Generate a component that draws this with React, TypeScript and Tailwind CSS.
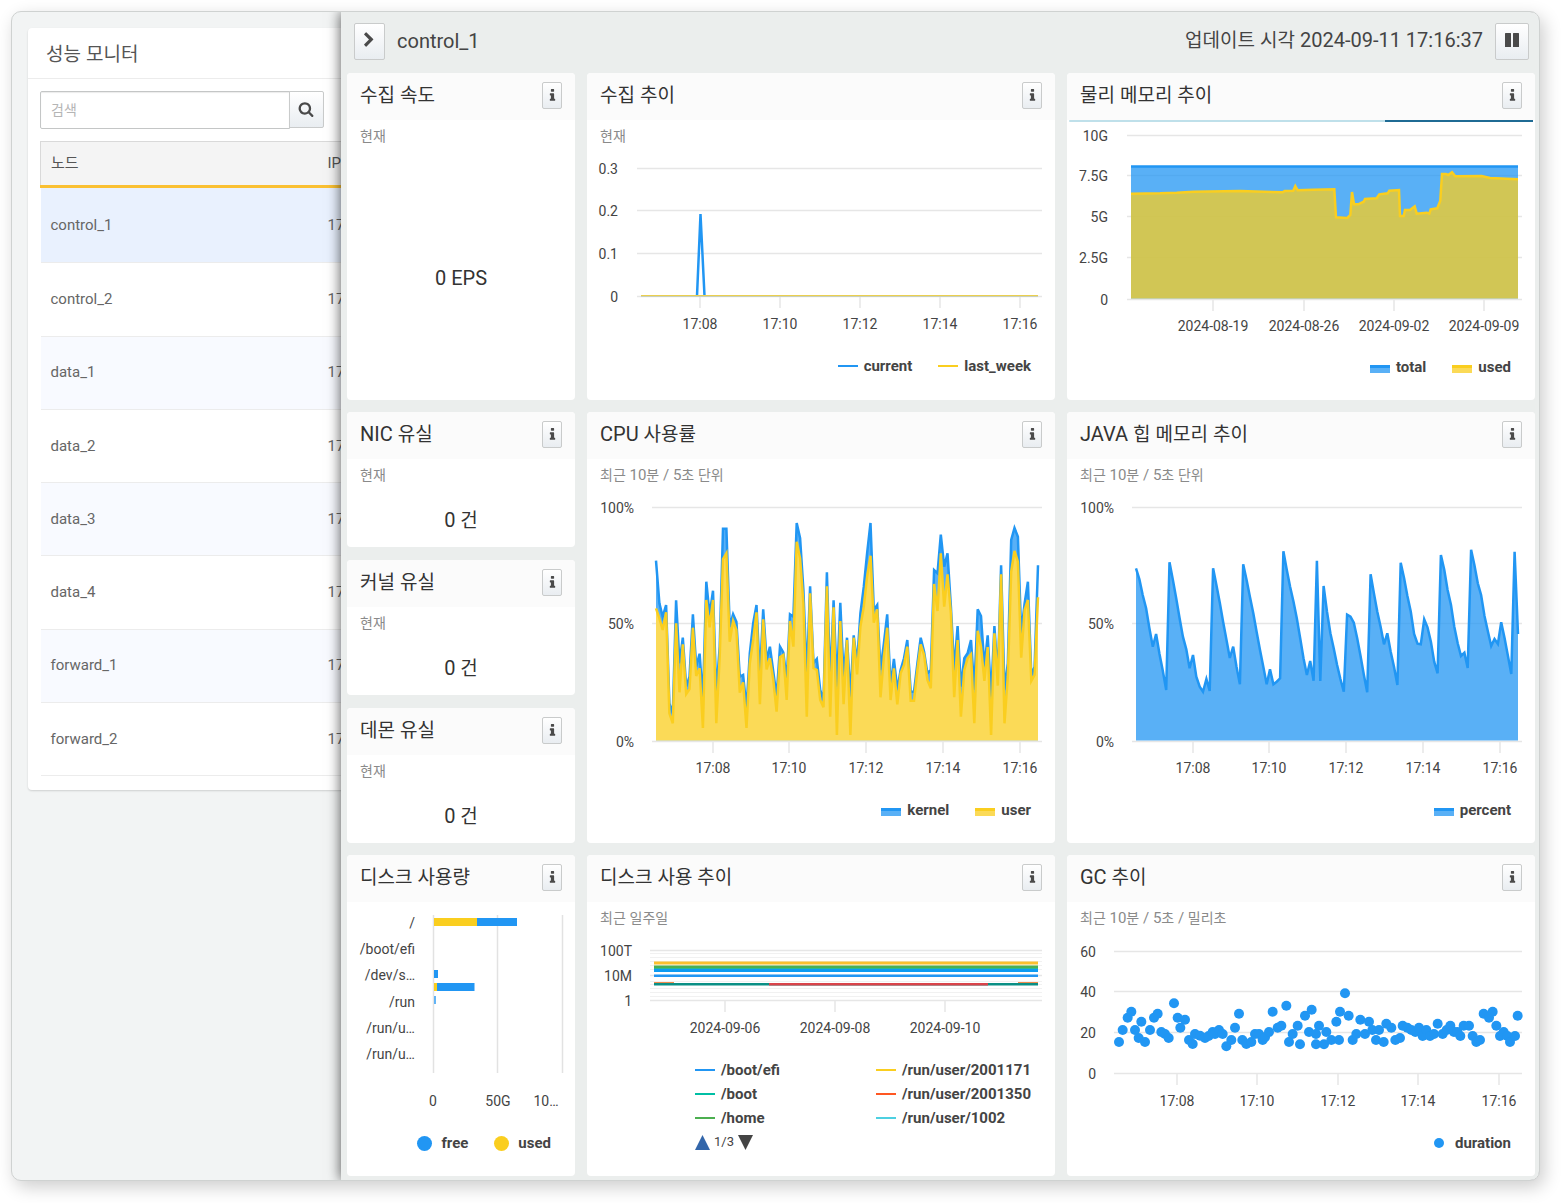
import React from "react";

type Point = [number, number];

const BLUE = "#2196f3";
const YELLOW = "#face1f";

/* ---------- data ---------- */

const nodes = ["control_1", "control_2", "data_1", "data_2", "data_3", "data_4", "forward_1", "forward_2"];

const memoryUsed: Point[] = [
  [213, 581], [300, 580], [350, 578], [400, 575], [540, 573], [668, 577], [674, 573], [700, 572], [706, 558],
  [713, 571], [760, 569], [823, 568], [828, 652], [862, 654], [871, 645], [876, 576], [882, 613], [895, 613],
  [911, 605], [915, 597], [950, 595], [958, 583], [983, 580], [988, 572], [1017, 570], [1020, 648], [1031, 648],
  [1035, 630], [1050, 630], [1064, 619], [1070, 641], [1100, 638], [1108, 641], [1112, 628], [1132, 625],
  [1141, 602], [1146, 522], [1158, 522], [1165, 525], [1176, 517], [1186, 529], [1265, 528], [1290, 534],
  [1374, 538],
];

const cpuUser = [
  355, 385, 420, 367, 670, 700, 400, 607, 463, 612, 597, 413, 558, 535, 714, 330, 412, 330, 700, 500, 207, 190, 455,
  393, 420, 608, 577, 714, 520, 450, 367, 643, 388, 538, 505, 570, 665, 502, 495, 630, 393, 470, 155, 205, 340, 680,
  310, 535, 540, 630, 652, 289, 680, 352, 735, 393, 643, 450, 735, 443, 553, 410, 350, 260, 197, 398, 358, 622, 500,
  413, 630, 535, 643, 550, 525, 470, 632, 632, 540, 463, 495, 570, 595, 282, 363, 190, 350, 253, 370, 622, 450, 680,
  540, 505, 493, 700, 422, 470, 573, 471, 735, 430, 587, 253, 700, 560, 245, 183, 215, 503, 360, 330, 573, 555, 322,
];

const cpuKernel = [
  212, 340, 380, 345, 640, 670, 331, 520, 443, 590, 560, 373, 530, 491, 630, 275, 375, 302, 610, 470, 116, 116, 410,
  373, 395, 560, 555, 655, 490, 400, 345, 560, 358, 510, 470, 545, 620, 470, 487, 570, 373, 380, 99, 145, 300, 560,
  289, 520, 507, 600, 630, 247, 580, 331, 590, 338, 560, 443, 620, 436, 520, 370, 290, 190, 99, 360, 345, 540, 460,
  373, 590, 507, 600, 540, 505, 450, 605, 605, 520, 443, 485, 550, 540, 240, 250, 134, 230, 190, 350, 540, 408, 590,
  505, 490, 450, 600, 358, 378, 530, 436, 620, 408, 560, 226, 600, 520, 150, 114, 140, 430, 340, 275, 555, 530, 226,
];

const heapPercent = [
  235, 268, 315, 355, 415, 470, 432, 492, 542, 600, 217, 270, 325, 385, 440, 478, 535, 495, 560, 590, 605, 567, 603,
  235, 285, 338, 395, 450, 504, 470, 530, 583, 223, 270, 320, 370, 425, 480, 530, 583, 538, 583, 575, 565, 184, 240,
  290, 335, 385, 445, 505, 555, 513, 572, 212, 573, 288, 365, 430, 475, 525, 567, 605, 374, 380, 398, 445, 497, 555,
  607, 253, 310, 365, 410, 463, 430, 485, 530, 585, 218, 265, 318, 365, 432, 461, 463, 388, 412, 455, 515, 550, 195,
  240, 300, 345, 410, 460, 498, 488, 534, 179, 225, 280, 315, 378, 423, 468, 447, 462, 397, 445, 497, 552, 185, 432,
];

const gcDurations: Point[] = [
  [177, 366], [188, 330], [203, 293], [214, 275], [225, 330], [236, 354], [244, 305], [255, 366], [270, 330],
  [282, 293], [293, 281], [304, 336], [315, 342], [326, 354], [342, 250], [353, 293], [361, 323], [375, 299],
  [387, 360], [398, 372], [405, 342], [420, 347], [435, 354], [446, 348], [458, 336], [465, 342], [477, 330],
  [488, 342], [499, 379], [514, 360], [525, 323], [537, 281], [547, 360], [559, 372], [574, 366], [585, 342],
  [597, 342], [608, 360], [615, 352], [627, 336], [638, 275], [653, 323], [664, 317], [679, 257], [687, 366],
  [698, 342], [713, 317], [720, 373], [735, 287], [747, 336], [755, 269], [768, 342], [768, 373], [777, 317],
  [792, 373], [799, 336], [814, 360], [829, 305], [837, 360], [840, 275], [855, 220], [866, 287], [878, 360],
  [889, 342], [901, 299], [915, 342], [927, 305], [937, 330], [948, 360], [957, 330], [971, 366], [979, 311],
  [994, 323], [1006, 360], [1020, 354], [1028, 317], [1042, 323], [1054, 330], [1066, 336], [1077, 323],
  [1088, 348], [1099, 330], [1110, 348], [1122, 342], [1133, 311], [1148, 342], [1160, 330], [1171, 317],
  [1182, 336], [1192, 336], [1201, 348], [1211, 317], [1227, 317], [1238, 348], [1249, 366], [1260, 360],
  [1271, 281], [1287, 293], [1298, 275], [1309, 317], [1320, 348], [1331, 336], [1342, 348], [1350, 366],
  [1365, 348], [1373, 287],
];

/* Samples are stored at three units per chart unit, measured from (ox, oy). */
const place = (data: Point[], ox: number, oy: number): Point[] => data.map(([x, y]) => [(x - ox) / 3, (y - oy) / 3]);

/* Evenly spaced samples of the ten-minute charts. */
const spread = (values: number[]): Point[] => values.map((v, i) => [69 + (i * 382) / (values.length - 1), v / 3 + 1]);

const join = (points: Point[]) => points.map(([x, y]) => `${x.toFixed(1)},${y.toFixed(1)}`).join(" ");

/* ---------- icons ---------- */

function Glyph({ d, size }: { d: string; size: number }) {
  return (
    <svg viewBox="0 0 1792 1792" width={size} height={size} fill="currentColor" aria-hidden="true">
      <path d={d} />
    </svg>
  );
}

const CHEVRON =
  "M1363 877l-742 742q-19 19-45 19t-45-19l-166-166q-19-19-19-45t19-45l531-531-531-531q-19-19-19-45t19-45l166-166q19-19 45-19t45 19l742 742q19 19 19 45t-19 45z";
const SEARCH =
  "M1216 832q0-185-131.5-316.5t-316.5-131.5-316.5 131.5-131.5 316.5 131.5 316.5 316.5 131.5 316.5-131.5 131.5-316.5zm512 832q0 52-38 90t-90 38q-54 0-90-38l-343-342q-179 124-399 124-143 0-273.5-55.5t-225-150-150-225-55.5-273.5 55.5-273.5 150-225 225-150 273.5-55.5 273.5 55.5 225 150 150 225 55.5 273.5q0 220-124 399l343 343q37 37 37 90z";
const INFO =
  "M1216 1344v128q0 26-19 45t-45 19h-512q-26 0-45-19t-19-45v-128q0-26 19-45t45-19h64v-384h-64q-26 0-45-19t-19-45v-128q0-26 19-45t45-19h384q26 0 45 19t19 45v576h64q26 0 45 19t19 45zm-128-1152v192q0 26-19 45t-45 19h-256q-26 0-45-19t-19-45v-192q0-26 19-45t45-19h256q26 0 45 19t19 45z";

/* ---------- building blocks ---------- */

/* Hangul looks larger than Roboto at the same size, so its runs are set one pixel smaller. */
function Mixed({ text, small = false }: { text: string; small?: boolean }) {
  return (
    <>
      {text.split(/([가-힣]+)/).map((run, i) =>
        i % 2 === 1 ? (
          <span key={i} className={small ? "text-sm" : "text-[19px]"}>
            {run}
          </span>
        ) : (
          run
        ),
      )}
    </>
  );
}

function ToolButton({ label, className, children }: { label: string; className: string; children: React.ReactNode }) {
  return (
    <button
      type="button"
      aria-label={label}
      className={`flex shrink-0 items-center justify-center border border-[#c9cbcb] bg-linear-to-b from-white to-[#e9edf1] text-[#4a4a4a] ${className}`}
    >
      {children}
    </button>
  );
}

function Card({
  title,
  note,
  loading,
  className = "",
  children,
}: {
  title: string;
  note?: string;
  loading?: boolean;
  className?: string;
  children: React.ReactNode;
}) {
  return (
    <section className={`flex min-w-0 flex-col overflow-hidden rounded bg-white pb-[7px] ${className}`}>
      <header className="flex h-[47px] shrink-0 items-center justify-between bg-[#fbfbfb] px-[13px] pb-0.5">
        <h2 className="text-xl leading-6 text-[#333]">
          <Mixed text={title} />
        </h2>
        <ToolButton label={`${title} 정보`} className="h-[27px] w-5 rounded-xs">
          <Glyph d={INFO} size={15} />
        </ToolButton>
      </header>
      {loading && (
        <div className="mx-0.5 flex h-0.5 shrink-0 justify-end rounded-full bg-[#bfe0ea]">
          <div className="w-[32%] bg-[#1f6b94]" />
        </div>
      )}
      {note && (
        <p className="h-[30px] shrink-0 px-[13px] pt-1 text-[15px] leading-6 text-[#8a8a8a]">
          <Mixed text={note} small />
        </p>
      )}
      {children}
    </section>
  );
}

function Stat({ children }: { children: string }) {
  return (
    <p className="grid grow place-items-center pt-3 text-xl leading-6 text-[#333]">
      <span>
        <Mixed text={children} />
      </span>
    </p>
  );
}

type LegendItem = { label: string; color: string };

function Swatch({ kind, color }: { kind: "line" | "area" | "dot" | "disc"; color: string }) {
  if (kind === "line") return <span className="h-0.5 w-5" style={{ backgroundColor: color }} />;
  if (kind === "dot") return <span className="mr-[5px] size-2.5 rounded-full" style={{ backgroundColor: color }} />;
  if (kind === "disc") return <span className="mr-[3px] size-[15px] rounded-full" style={{ backgroundColor: color }} />;
  return (
    <svg viewBox="0 0 20 8" className="mt-[3px] h-2 w-5" aria-hidden="true">
      <rect width="20" height="8" fill={color} fillOpacity="0.75" />
      <rect width="20" height="3" fill={color} />
    </svg>
  );
}

function Legend({ kind, items }: { kind: "line" | "area" | "dot" | "disc"; items: LegendItem[] }) {
  return (
    <ul className="flex h-[52px] shrink-0 items-center justify-end gap-[26px] pr-6 text-[15px] leading-6 font-bold text-[#444]">
      {items.map((item) => (
        <li key={item.label} className="flex items-center gap-1.5">
          <Swatch kind={kind} color={item.color} />
          {item.label}
        </li>
      ))}
    </ul>
  );
}

type Tick = { at: number; label: string };

function Chart({
  title,
  width = 468,
  height,
  left,
  x,
  y,
  labelX,
  xLabelY,
  under,
  children,
}: {
  title: string;
  width?: number;
  height: number;
  left: number;
  x: Tick[];
  y: Tick[];
  labelX: number;
  xLabelY: number;
  under?: React.ReactNode;
  children: React.ReactNode;
}) {
  const base = y[y.length - 1].at;
  return (
    <svg viewBox={`0 0 ${width} ${height}`} className="block w-full shrink-0" role="img" aria-label={title}>
      {under}
      <g stroke="#e6e6e6" strokeWidth="1.5">
        {y.map((t) => (
          <line key={t.label} x1={left} x2="455" y1={t.at + 0.5} y2={t.at + 0.5} />
        ))}
        {x.map((t) => (
          <line key={t.label} x1={t.at} x2={t.at} y1={base} y2={base + 12} />
        ))}
      </g>
      <g className="text-sm" fill="#444">
        {y.map((t) => (
          <text key={t.label} x={labelX} y={t.at + 6} textAnchor="end">
            {t.label}
          </text>
        ))}
        {x.map((t) => (
          <text key={t.label} x={t.at} y={xLabelY + 5} textAnchor="middle">
            {t.label}
          </text>
        ))}
      </g>
      {children}
    </svg>
  );
}

function Area({ points, base, color }: { points: Point[]; base: number; color: string }) {
  const first = points[0][0];
  const last = points[points.length - 1][0];
  return (
    <g>
      <polygon points={`${first},${base} ${join(points)} ${last},${base}`} fill={color} fillOpacity="0.75" />
      <polyline points={join(points)} fill="none" stroke={color} strokeWidth="2.5" />
    </g>
  );
}

/* ---------- charts ---------- */

function CollectTrend() {
  return (
    <Chart
      title="수집 추이"
      height={190}
      left={50}
      labelX={31}
      xLabelY={174}
      y={[
        { at: 18, label: "0.3" },
        { at: 60, label: "0.2" },
        { at: 103, label: "0.1" },
        { at: 146, label: "0" },
      ]}
      x={[
        { at: 113, label: "17:08" },
        { at: 193, label: "17:10" },
        { at: 273, label: "17:12" },
        { at: 353, label: "17:14" },
        { at: 433, label: "17:16" },
      ]}
    >
      <polyline points="110,146 113.5,64 117.5,146" fill="none" stroke={BLUE} strokeWidth="2.5" strokeLinejoin="bevel" />
      <rect x="54" y="145" width="397" height="1" fill="#ebcf4e" />
      <rect x="54" y="146" width="397" height="1" fill="#c8d0bd" />
    </Chart>
  );
}

function MemoryTrend() {
  return (
    <Chart
      title="물리 메모리 추이"
      height={219}
      left={60}
      labelX={41}
      xLabelY={204}
      y={[
        { at: 13, label: "10G" },
        { at: 53, label: "7.5G" },
        { at: 94, label: "5G" },
        { at: 135, label: "2.5G" },
        { at: 177, label: "0" },
      ]}
      x={[
        { at: 146, label: "2024-08-19" },
        { at: 237, label: "2024-08-26" },
        { at: 327, label: "2024-09-02" },
        { at: 417, label: "2024-09-09" },
      ]}
    >
      <Area points={[[64, 44.5], [451, 44.5]]} base={176.5} color={BLUE} />
      <Area points={place(memoryUsed, 21, 366)} base={176.5} color={YELLOW} />
    </Chart>
  );
}

function PercentChart({ title, children }: { title: string; children: React.ReactNode }) {
  return (
    <Chart
      title={title}
      height={295}
      left={65}
      labelX={47}
      xLabelY={279}
      y={[
        { at: 18, label: "100%" },
        { at: 134, label: "50%" },
        { at: 252, label: "0%" },
      ]}
      x={[
        { at: 126, label: "17:08" },
        { at: 202, label: "17:10" },
        { at: 279, label: "17:12" },
        { at: 356, label: "17:14" },
        { at: 433, label: "17:16" },
      ]}
    >
      {children}
    </Chart>
  );
}

function DiskUsage() {
  const mounts = ["/", "/boot/efi", "/dev/s…", "/run", "/run/u…", "/run/u…"];
  return (
    <svg viewBox="0 0 228 215" className="block w-full shrink-0" role="img" aria-label="디스크 사용량">
      <g stroke="#e2e2e2" strokeWidth="1.5">
        <line x1="86.5" x2="86.5" y1="13" y2="171" />
        <line x1="150.5" x2="150.5" y1="13" y2="171" />
        <line x1="215.5" x2="215.5" y1="13" y2="171" />
      </g>
      <g fill={BLUE}>
        <rect x="130" y="16" width="40" height="8" />
        <rect x="87" y="68" width="4" height="8" />
        <rect x="90" y="81" width="37.5" height="8" />
        <rect x="87" y="94" width="2" height="8" fillOpacity="0.7" />
      </g>
      <g fill={YELLOW}>
        <rect x="87" y="16" width="43" height="8" />
        <rect x="87" y="81" width="3" height="8" />
      </g>
      <g className="text-sm" fill="#444">
        {mounts.map((m, i) => (
          <text key={i} x="68" y={26 + Math.round(i * 26.2)} textAnchor="end">
            {m}
          </text>
        ))}
        <text x="86" y="204" textAnchor="middle">0</text>
        <text x="151" y="204" textAnchor="middle">50G</text>
        <text x="199" y="204" textAnchor="middle">10…</text>
      </g>
    </svg>
  );
}

function DiskTrend() {
  return (
    <Chart
      title="디스크 사용 추이"
      height={126}
      left={63}
      labelX={45}
      xLabelY={96}
      y={[
        { at: 18, label: "100T" },
        { at: 43, label: "10M" },
        { at: 68, label: "1" },
      ]}
      x={[
        { at: 138, label: "2024-09-06" },
        { at: 248, label: "2024-09-08" },
        { at: 358, label: "2024-09-10" },
      ]}
      under={
        <g stroke="#f1f1f1">
          {[22, 26, 30, 34, 38, 50, 53, 57, 61, 65].map((y) => (
            <line key={y} x1="63" x2="455" y1={y - 0.5} y2={y - 0.5} />
          ))}
        </g>
      }
    >
      <rect x="67" y="29.5" width="384" height="3" fill="#fbc02d" />
      <rect x="67" y="33.5" width="384" height="3" fill="#4caf50" />
      <rect x="67" y="36" width="384" height="1" fill="#26b99a" />
      <rect x="67" y="37" width="384" height="3" fill="#0d9bf2" />
      <rect x="67" y="42.5" width="384" height="2.5" fill={BLUE} />
      <rect x="67" y="50" width="20" height="1.5" fill="#f08a4b" />
      <rect x="431" y="50" width="20" height="1.5" fill="#f08a4b" />
      <rect x="67" y="51" width="384" height="2.5" fill="#0a8f85" />
      <rect x="182" y="51" width="219" height="2.5" fill="#d9434a" />
    </Chart>
  );
}

function GcTrend() {
  return (
    <Chart
      title="GC 추이"
      height={185}
      left={47}
      labelX={29}
      xLabelY={169}
      y={[
        { at: 19, label: "60" },
        { at: 59, label: "40" },
        { at: 100, label: "20" },
        { at: 141, label: "0" },
      ]}
      x={[
        { at: 110, label: "17:08" },
        { at: 190, label: "17:10" },
        { at: 271, label: "17:12" },
        { at: 351, label: "17:14" },
        { at: 432, label: "17:16" },
      ]}
    >
      <g fill={BLUE}>
        {place(gcDurations, 21, 36).map(([cx, cy], i) => (
          <circle key={i} cx={cx} cy={cy} r="5" />
        ))}
      </g>
    </Chart>
  );
}

function DiskLegend() {
  const items: LegendItem[] = [
    { label: "/boot/efi", color: BLUE },
    { label: "/run/user/2001171", color: YELLOW },
    { label: "/boot", color: "#00bfa5" },
    { label: "/run/user/2001350", color: "#ff5722" },
    { label: "/home", color: "#4caf50" },
    { label: "/run/user/1002", color: "#4dd0e1" },
  ];
  return (
    <div className="flex justify-end pr-6">
      <div>
        <ul className="grid grid-cols-[181px_auto] text-[15px] leading-6 font-bold text-[#444]">
          {items.map((item) => (
            <li key={item.label} className="flex items-center gap-1.5">
              <Swatch kind="line" color={item.color} />
              {item.label}
            </li>
          ))}
        </ul>
        <div className="flex h-6 items-center gap-1 text-[13px] text-[#444]">
          <button type="button" aria-label="이전 범례">
            <svg viewBox="0 0 16 16" className="size-[15px]" aria-hidden="true">
              <path d="M8 0L16 16H0Z" fill="#3366aa" />
            </svg>
          </button>
          1/3
          <button type="button" aria-label="다음 범례">
            <svg viewBox="0 0 16 16" className="size-[15px]" aria-hidden="true">
              <path d="M0 0H16L8 16Z" fill="#444" />
            </svg>
          </button>
        </div>
      </div>
    </div>
  );
}

/* ---------- page ---------- */

function NodeList() {
  return (
    <aside className="w-[329px] shrink-0 overflow-hidden pt-4 pl-4">
      <div className="w-[460px] rounded bg-white pb-3.5 shadow-[0_1px_2px_rgba(0,0,0,0.15)]">
        <h1 className="border-b border-[#ececec] px-[18px] pt-3.5 pb-[11px] text-xl leading-6 text-[#555]">
          <Mixed text="성능 모니터" />
        </h1>
        <form className="flex items-start px-3 pt-3" onSubmit={(e) => e.preventDefault()}>
          <input
            type="search"
            aria-label="검색"
            placeholder="검색"
            className="h-[38px] w-[250px] rounded-l-xs border border-[#c4c6c6] bg-white px-2.5 text-sm text-[#555] shadow-[inset_0_1px_1px_rgba(0,0,0,0.08)] placeholder:text-[#b5b5b5]"
          />
          <ToolButton label="검색 실행" className="-ml-px h-[37px] w-[35px] rounded-r-xs pr-0.5 pb-0.5">
            <Glyph d={SEARCH} size={16} />
          </ToolButton>
        </form>
        <table className="mt-3 ml-3 h-[635px] w-[436px] table-fixed border-collapse text-left text-[15px] text-[#666]">
          <thead>
            <tr className="h-[45px] border-t border-b-3 border-l border-t-[#d9d9d9] border-b-[#fac032] border-l-[#d9d9d9] bg-[#f4f4f4]">
              <th scope="col" className="w-[277px] px-2.5 font-normal text-[#555]">노드</th>
              <th scope="col" className="px-2.5 font-normal text-[#555]">IP</th>
            </tr>
          </thead>
          <tbody>
            {nodes.map((name, i) => (
              <tr
                key={name}
                className={`border-b border-[#ececec] ${i === 0 ? "bg-[#e9f1fe]" : i % 2 === 0 ? "bg-[#f8faff]" : "bg-white"}`}
              >
                <td className="px-2.5">{name}</td>
                <td className="px-2.5">17</td>
              </tr>
            ))}
          </tbody>
        </table>
      </div>
    </aside>
  );
}

export default function App() {
  return (
    <div className="bg-white pt-[11px] pr-[22px] pb-[22px] pl-[11px] [font-family:Roboto,'Noto_Sans_CJK_KR',sans-serif]">
      <div className="flex overflow-hidden rounded-[10px] border border-[#cfd2d1] bg-[#f2f4f4] shadow-[4px_6px_18px_rgba(0,0,0,0.2)]">
        <NodeList />
        <main className="relative min-w-0 grow bg-[#ebeeed] pr-1 pb-1 pl-1.5 shadow-[-1px_0_12px_rgba(0,0,0,0.6)]">
          <div className="flex items-center pt-[11px] pr-1.5 pb-[13px] pl-[7px] text-xl leading-6 text-[#444]">
            <ToolButton label="닫기" className="h-[37px] w-[31px] rounded-xs pr-0.5 pb-[3px]">
              <Glyph d={CHEVRON} size={16} />
            </ToolButton>
            <span className="ml-3 grow pb-0.5">control_1</span>
            <span className="mr-3 pb-0.5">
              <Mixed text="업데이트 시각 2024-09-11 17:16:37" />
            </span>
            <ToolButton label="일시 정지" className="h-[37px] w-[34px] rounded-xs pb-[3px]">
              <svg viewBox="0 0 14 14" className="size-3.5" fill="currentColor" aria-hidden="true">
                <rect width="6" height="14" rx="0.5" />
                <rect x="8" width="6" height="14" rx="0.5" />
              </svg>
            </ToolButton>
          </div>

          <div className="grid grid-cols-5 gap-3">
            <Card title="수집 속도" note="현재">
              <Stat>0 EPS</Stat>
            </Card>
            <Card title="수집 추이" note="현재" className="col-span-2">
              <CollectTrend />
              <Legend kind="line" items={[{ label: "current", color: BLUE }, { label: "last_week", color: YELLOW }]} />
            </Card>
            <Card title="물리 메모리 추이" loading className="col-span-2">
              <MemoryTrend />
              <Legend kind="area" items={[{ label: "total", color: BLUE }, { label: "used", color: YELLOW }]} />
            </Card>

            <div className="flex flex-col gap-[13px]">
              {["NIC 유실", "커널 유실", "데몬 유실"].map((title) => (
                <Card key={title} title={title} note="현재" className="grow">
                  <Stat>0 건</Stat>
                </Card>
              ))}
            </div>
            <Card title="CPU 사용률" note="최근 10분 / 5초 단위" className="col-span-2">
              <PercentChart title="CPU 사용률">
                <Area points={spread(cpuKernel)} base={251.5} color={BLUE} />
                <polygon points={`69,251.5 ${join(spread(cpuUser))} 451,251.5`} fill="#fff" />
                <Area points={spread(cpuUser)} base={251.5} color={YELLOW} />
              </PercentChart>
              <Legend kind="area" items={[{ label: "kernel", color: BLUE }, { label: "user", color: YELLOW }]} />
            </Card>
            <Card title="JAVA 힙 메모리 추이" note="최근 10분 / 5초 단위" className="col-span-2">
              <PercentChart title="JAVA 힙 메모리 추이">
                <Area points={spread(heapPercent)} base={251.5} color={BLUE} />
              </PercentChart>
              <Legend kind="area" items={[{ label: "percent", color: BLUE }]} />
            </Card>

            <Card title="디스크 사용량">
              <DiskUsage />
              <Legend kind="disc" items={[{ label: "free", color: BLUE }, { label: "used", color: YELLOW }]} />
            </Card>
            <Card title="디스크 사용 추이" note="최근 일주일" className="col-span-2">
              <DiskTrend />
              <DiskLegend />
            </Card>
            <Card title="GC 추이" note="최근 10분 / 5초 / 밀리초" className="col-span-2">
              <GcTrend />
              <Legend kind="dot" items={[{ label: "duration", color: BLUE }]} />
            </Card>
          </div>
        </main>
      </div>
    </div>
  );
}
